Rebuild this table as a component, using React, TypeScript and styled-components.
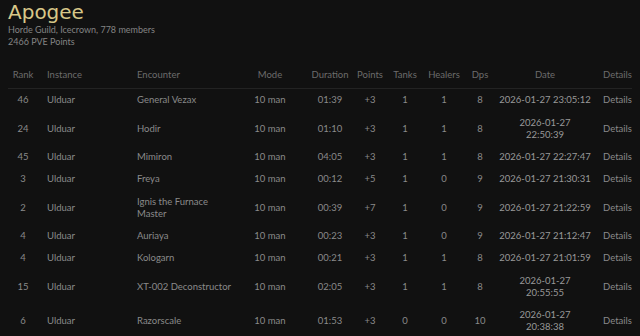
import { FC } from "react";
import styled, { createGlobalStyle } from "styled-components";

const GlobalStyle = createGlobalStyle`
  html, body {
    margin: 0;
    padding: 0;
    background: #111111;
  }
  body {
    font-family: Lato, "Liberation Sans", sans-serif;
    color: #8a8a8a;
  }
`;

const Page = styled.div`
  padding: 0 8px;
  width: 624px;
`;

const Title = styled.h1`
  margin: 0;
  font-family: "DejaVu Sans", Lato, sans-serif;
  font-size: 20px;
  line-height: normal;
  font-weight: 400;
  color: #d8c788;
`;

const Meta = styled.div`
  font-size: 9px;
  line-height: 12px;
  color: #848484;
`;

const Table = styled.div`
  margin-top: 16px;
  font-size: 9.5px;
`;

const columns =
  "30px 90px 112px 60px 60px 20px 50px 28px 44px 86px 44px";

const HeaderRow = styled.div`
  display: grid;
  grid-template-columns: ${columns};
  padding: 5px 0 7px;
  line-height: 12px;
  color: #6c6c6c;
  border-bottom: 1px solid #232323;
`;

const Row = styled.div`
  display: grid;
  grid-template-columns: ${columns};
  padding: 5.2px 0;
  line-height: 12px;
`;

type Align = "center" | "left";

const Cell = styled.div<{ $align: Align; $indent?: number; $tone?: string }>`
  display: flex;
  flex-direction: column;
  justify-content: center;
  align-items: ${(p) => (p.$align === "center" ? "center" : "flex-start")};
  padding-left: ${(p) => p.$indent ?? 0}px;
  white-space: nowrap;
  color: ${(p) => p.$tone ?? "inherit"};
`;

interface Col {
  label: string;
  align: Align;
  indent?: number;
}

const cols: Col[] = [
  { label: "Rank", align: "center" },
  { label: "Instance", align: "left", indent: 9 },
  { label: "Encounter", align: "left", indent: 9 },
  { label: "Mode", align: "center" },
  { label: "Duration", align: "center" },
  { label: "Points", align: "center" },
  { label: "Tanks", align: "center" },
  { label: "Healers", align: "center" },
  { label: "Dps", align: "center" },
  { label: "Date", align: "center" },
  { label: "Details", align: "left", indent: 15 },
];

// each cell is a list of lines, wrapped as in the original
const rows: string[][][] = [
  [["46"], ["Ulduar"], ["General Vezax"], ["10 man"], ["01:39"], ["+3"], ["1"], ["1"], ["8"], ["2026-01-27 23:05:12"], ["Details"]],
  [["24"], ["Ulduar"], ["Hodir"], ["10 man"], ["01:10"], ["+3"], ["1"], ["1"], ["8"], ["2026-01-27", "22:50:39"], ["Details"]],
  [["45"], ["Ulduar"], ["Mimiron"], ["10 man"], ["04:05"], ["+3"], ["1"], ["1"], ["8"], ["2026-01-27 22:27:47"], ["Details"]],
  [["3"], ["Ulduar"], ["Freya"], ["10 man"], ["00:12"], ["+5"], ["1"], ["0"], ["9"], ["2026-01-27 21:30:31"], ["Details"]],
  [["2"], ["Ulduar"], ["Ignis the Furnace", "Master"], ["10 man"], ["00:39"], ["+7"], ["1"], ["0"], ["9"], ["2026-01-27 21:22:59"], ["Details"]],
  [["4"], ["Ulduar"], ["Auriaya"], ["10 man"], ["00:23"], ["+3"], ["1"], ["0"], ["9"], ["2026-01-27 21:12:47"], ["Details"]],
  [["4"], ["Ulduar"], ["Kologarn"], ["10 man"], ["00:21"], ["+3"], ["1"], ["1"], ["8"], ["2026-01-27 21:01:59"], ["Details"]],
  [["15"], ["Ulduar"], ["XT-002 Deconstructor"], ["10 man"], ["02:05"], ["+3"], ["1"], ["1"], ["8"], ["2026-01-27", "20:55:55"], ["Details"]],
  [["6"], ["Ulduar"], ["Razorscale"], ["10 man"], ["01:53"], ["+3"], ["0"], ["0"], ["10"], ["2026-01-27", "20:38:38"], ["Details"]],
];

const App: FC = () => {
  return (
    <Page>
      <GlobalStyle />
      <Title>Apogee</Title>
      <Meta>
        <div>Horde Guild, Icecrown, 778 members</div>
        <div>2466 PVE Points</div>
      </Meta>
      <Table>
        <HeaderRow>
          {cols.map((c) => (
            <Cell key={c.label} $align={c.align} $indent={c.indent}>
              <span>{c.label}</span>
            </Cell>
          ))}
        </HeaderRow>
        {rows.map((row, i) => (
          <Row key={i}>
            {row.map((lines, j) => (
              <Cell
                key={j}
                $align={cols[j].align}
                $indent={cols[j].indent}
                $tone={j === 9 ? "#999999" : undefined}
              >
                {lines.map((line) => (
                  <span key={line}>{line}</span>
                ))}
              </Cell>
            ))}
          </Row>
        ))}
      </Table>
    </Page>
  );
};

export default App;
